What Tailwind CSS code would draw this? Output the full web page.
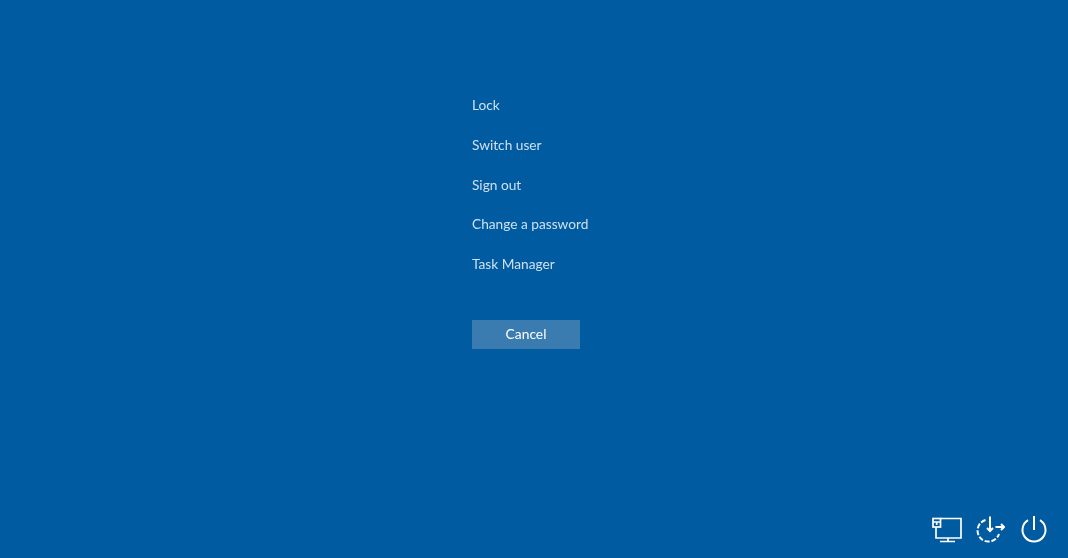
<!DOCTYPE html>
<html lang="en">
<head>
  <meta charset="UTF-8" />
  <title>Security options</title>
  <script src="https://cdn.jsdelivr.net/npm/@tailwindcss/browser@4"></script>
</head>
<body class="bg-[#005ba1] overflow-hidden font-['Lato',sans-serif]">
  <div class="h-[558px] w-[1068px] flex flex-col">
    <main class="pl-[472px] pt-[85px] flex flex-col items-start blur-[0.3px]">
      <ul class="flex flex-col text-[13.7px] text-[#cfe0ee]">
        <li class="h-[39.8px] leading-[40px]">Lock</li>
        <li class="h-[39.8px] leading-[40px]">Switch user</li>
        <li class="h-[39.8px] leading-[40px]">Sign out</li>
        <li class="h-[39.8px] leading-[40px]">Change a password</li>
        <li class="h-[39.8px] leading-[40px]">Task Manager</li>
      </ul>
      <button class="mt-[36px] w-[108px] h-[29px] bg-[#3b7cb0] text-white text-[13.8px]">Cancel</button>
    </main>
    <footer class="mt-auto pr-[20px] pb-[15px] flex justify-end items-center text-white blur-[0.4px]">
      <!-- network -->
      <svg class="w-[30px] h-[28px]" viewBox="0 0 30 28" fill="none" stroke="currentColor" stroke-width="1.7">
        <path d="M8.500 3.500H29V23H4V12" />
        <rect x="1" y="3.500" width="7.500" height="8.500" />
        <path d="M1 7H8.500M4.700 7V10" />
        <path d="M16 23V26.500M8 26.500H23" />
      </svg>
      <!-- accessibility -->
      <svg class="ml-[13px] w-[30px] h-[28px]" viewBox="0 0 30 28" fill="none" stroke="currentColor" stroke-width="2">
        <path d="M10.500 5A11 11 0 1 0 24 19" stroke-dasharray="5 1.800" />
        <path d="M15 1.500V16M12 13L15 16L18 13" />
        <path d="M20.500 12H29M26 9L29 12L26 15" />
      </svg>
      <!-- power -->
      <svg class="ml-[15px] w-[28px] h-[28px]" viewBox="0 0 28 28" fill="none" stroke="currentColor" stroke-width="2">
        <path d="M8 5.200A11.500 11.500 0 1 0 20 5.200" />
        <path d="M14 1V15" />
      </svg>
    </footer>
  </div>
</body>
</html>
